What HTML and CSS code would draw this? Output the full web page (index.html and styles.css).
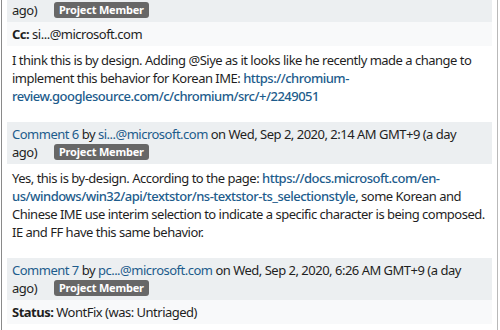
FILE: index.html
```html
<!DOCTYPE html>
<html lang="en">
<head>
  <meta charset="UTF-8">
  <title>Issue comments</title>
  <link rel="stylesheet" href="styles.css">
</head>
<body>
  <div class="thread">

    <div class="comment">
      <div class="comment-head">
        <a href="#c5">Comment 5</a> by <a href="#">pc...@microsoft.com</a> on Tue, Sep 1, 2020, 9:05 PM GMT+9 (a day
        ago) <span class="badge">Project Member</span>
      </div>
      <div class="amend"><b>Cc:</b> si...@microsoft.com</div>
      <div class="comment-body">
        I think this is by design. Adding @Siye as it looks like he recently made a change to
        implement this behavior for Korean IME: <a class="link" href="#">https://chromium-review.googlesource.com/c/chromium/src/+/2249051</a>
      </div>
    </div>

    <div class="comment">
      <div class="comment-head">
        <a href="#c6">Comment 6</a> by <a href="#">si...@microsoft.com</a> on Wed, Sep 2, 2020, 2:14 AM GMT+9 (a day
        ago) <span class="badge">Project Member</span>
      </div>
      <div class="comment-body">
        Yes, this is by-design. According to the page: <a class="link" href="#">https://docs.microsoft.com/en-us/windows/win32/api/textstor/ns-textstor-ts_selectionstyle</a>, some Korean and
        Chinese IME use interim selection to indicate a specific character is being composed.
        IE and FF have this same behavior.
      </div>
    </div>

    <div class="comment">
      <div class="comment-head">
        <a href="#c7">Comment 7</a> by <a href="#">pc...@microsoft.com</a> on Wed, Sep 2, 2020, 6:26 AM GMT+9 (a day
        ago) <span class="badge">Project Member</span>
      </div>
      <div class="amend"><b>Status:</b> WontFix (was: Untriaged)</div>
    </div>

  </div>
</body>
</html>
```

FILE: styles.css
```css
* {
  box-sizing: border-box;
}

body {
  margin: 0;
  background: #fff;
  font-family: 'Noto Sans', sans-serif;
  font-size: 13px;
  letter-spacing: -0.5px;
  color: #1f1f1f;
  overflow: hidden;
}

a {
  color: #1d5c8c;
  text-decoration: none;
}

.thread {
  margin: -20px 2px 0 1px;
  padding: 0 5px;
  border-left: 1px solid #8a8a8a;
  border-right: 1px solid #b9b9b9;
  min-height: 400px;
}

.comment {
  margin-bottom: 10px;
}

.comment-head {
  background: #eceff1;
  padding: 3px 24px 3px 5px;
  line-height: 18px;
}

.badge {
  display: inline-block;
  margin-left: 14px;
  padding: 0 5px;
  background: #676767;
  color: #fff;
  font-size: 11px;
  font-weight: bold;
  letter-spacing: -0.2px;
  line-height: 16px;
  border-radius: 3px;
  vertical-align: 1px;
}

.amend {
  background: #f8f9fa;
  padding: 3px 5px;
  line-height: 18px;
}

.comment-body {
  padding: 5px 0 7px 5px;
  line-height: 18px;
}

.link {
  font-weight: 500;
}
```
